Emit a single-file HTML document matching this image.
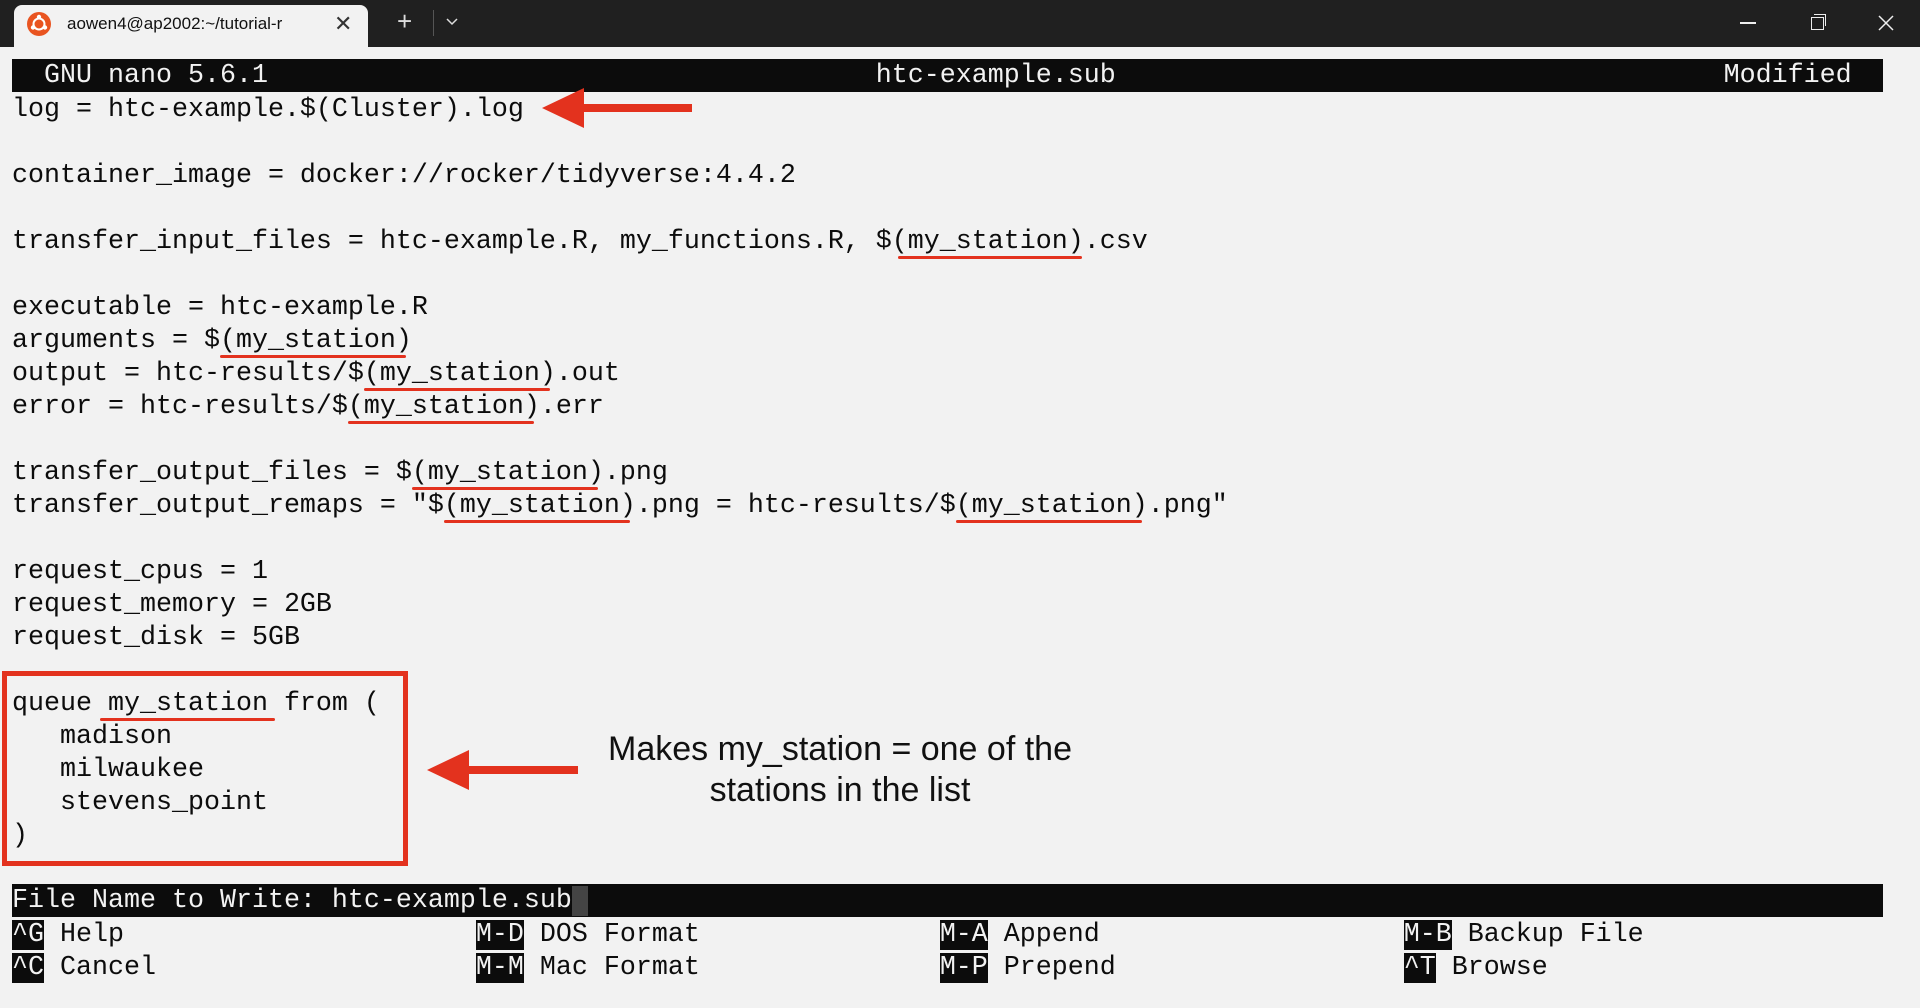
<!DOCTYPE html>
<html><head><meta charset="utf-8"><style>
html,body{margin:0;padding:0;width:1920px;height:1008px;overflow:hidden;background:#f2f2f2;}
#tabbar{position:absolute;left:0;top:0;width:1920px;height:47px;background:#202020;}
#tab{position:absolute;left:14px;top:5px;width:354px;height:42px;background:#f2f2f2;border-radius:8px 8px 0 0;}
.mono{font-family:"Liberation Mono","DejaVu Sans Mono",monospace;font-size:26.67px;line-height:36px;white-space:pre;color:#0c0c0c;}
.row{position:absolute;left:12px;height:33px;}
.bar{background:#0c0c0c;color:#f2f2f2;width:1871px;line-height:35px;}
.k{background:#0c0c0c;color:#f2f2f2;}
.ul{position:absolute;height:3px;background:#e3321e;border-radius:2px;}
</style></head><body>
<div id="tabbar">
  <div id="tab">
    <svg style="position:absolute;left:13px;top:7px" width="24" height="24" viewBox="0 0 24 24"><circle cx="12" cy="12" r="12" fill="#e95420"/><circle cx="12" cy="12" r="5.5" fill="none" stroke="#fff" stroke-width="2"/><circle cx="12" cy="5" r="2.2" fill="#fff"/><circle cx="6" cy="15.5" r="2.2" fill="#fff"/><circle cx="18" cy="15.5" r="2.2" fill="#fff"/></svg>
    <div style="position:absolute;left:53px;top:9px;font-family:'Liberation Sans',sans-serif;font-size:17px;color:#111;width:262px;overflow:hidden;white-space:nowrap">aowen4@ap2002:~/tutorial-r</div>
    <div style="position:absolute;left:320px;top:6px;font-family:'Liberation Sans',sans-serif;font-size:22px;color:#333">✕</div>
  </div>
  <div style="position:absolute;left:397px;top:6px;font-family:'Liberation Sans',sans-serif;font-size:26px;color:#ddd">+</div>
  <div style="position:absolute;left:433px;top:10px;width:1px;height:26px;background:#555"></div>
  <svg style="position:absolute;left:446px;top:18px" width="12" height="8" viewBox="0 0 12 8"><path d="M1 1 L6 6 L11 1" stroke="#ddd" stroke-width="1.5" fill="none"/></svg>
  <div style="position:absolute;left:1740px;top:22px;width:16px;height:1.5px;background:#eee"></div>
  <div style="position:absolute;left:1811px;top:17px;width:11px;height:11px;border:1.5px solid #eee"></div>
  <div style="position:absolute;left:1814px;top:14px;width:11px;height:11px;border-top:1.5px solid #eee;border-right:1.5px solid #eee"></div>
  <svg style="position:absolute;left:1878px;top:15px" width="16" height="16" viewBox="0 0 16 16"><path d="M1 1 L15 15 M15 1 L1 15" stroke="#eee" stroke-width="1.5"/></svg>
</div>

<div class="mono">
<div class="row bar" style="top:59px">  GNU nano 5.6.1                                      htc-example.sub                                      Modified</div>
<div class="row" style="top:92px">log = htc-example.$(Cluster).log</div>
<div class="row" style="top:158px">container_image = docker://rocker/tidyverse:4.4.2</div>
<div class="row" style="top:224px">transfer_input_files = htc-example.R, my_functions.R, $(my_station).csv</div>
<div class="row" style="top:290px">executable = htc-example.R</div>
<div class="row" style="top:323px">arguments = $(my_station)</div>
<div class="row" style="top:356px">output = htc-results/$(my_station).out</div>
<div class="row" style="top:389px">error = htc-results/$(my_station).err</div>
<div class="row" style="top:455px">transfer_output_files = $(my_station).png</div>
<div class="row" style="top:488px">transfer_output_remaps = "$(my_station).png = htc-results/$(my_station).png"</div>
<div class="row" style="top:554px">request_cpus = 1</div>
<div class="row" style="top:587px">request_memory = 2GB</div>
<div class="row" style="top:620px">request_disk = 5GB</div>
<div class="row" style="top:686px">queue my_station from (</div>
<div class="row" style="top:719px">   madison</div>
<div class="row" style="top:752px">   milwaukee</div>
<div class="row" style="top:785px">   stevens_point</div>
<div class="row" style="top:818px">)</div>
<div class="row bar" style="top:884px">File Name to Write: htc-example.sub<span style="background:#444"> </span></div>
<div class="row" style="top:917px"><span class="k">^G</span> Help                      <span class="k">M-D</span> DOS Format               <span class="k">M-A</span> Append                   <span class="k">M-B</span> Backup File</div>
<div class="row" style="top:950px"><span class="k">^C</span> Cancel                    <span class="k">M-M</span> Mac Format               <span class="k">M-P</span> Prepend                  <span class="k">^T</span> Browse</div>
</div>

<div class="ul" style="left:898px;top:256px;width:184px"></div>
<div class="ul" style="left:220px;top:355px;width:186px"></div>
<div class="ul" style="left:364px;top:388px;width:186px"></div>
<div class="ul" style="left:348px;top:421px;width:186px"></div>
<div class="ul" style="left:412px;top:487px;width:186px"></div>
<div class="ul" style="left:444px;top:520px;width:186px"></div>
<div class="ul" style="left:956px;top:520px;width:186px"></div>
<div class="ul" style="left:100px;top:718px;width:175px"></div>

<div style="position:absolute;left:2px;top:671px;width:396px;height:185px;border:5px solid #e3321e"></div>

<svg style="position:absolute;left:0;top:0" width="1920" height="1008">
  <path d="M542 108 L584 88 L584 104 L692 104 L692 112 L584 112 L584 128 Z" fill="#e3321e"/>
  <path d="M427 770 L469 750 L469 766 L578 766 L578 774 L469 774 L469 790 Z" fill="#e3321e"/>
</svg>

<div style="position:absolute;left:520px;top:729px;width:640px;text-align:center;font-family:'Liberation Sans',sans-serif;font-size:34px;line-height:41px;color:#111">Makes my_station = one of the<br>stations in the list</div>
</body></html>
